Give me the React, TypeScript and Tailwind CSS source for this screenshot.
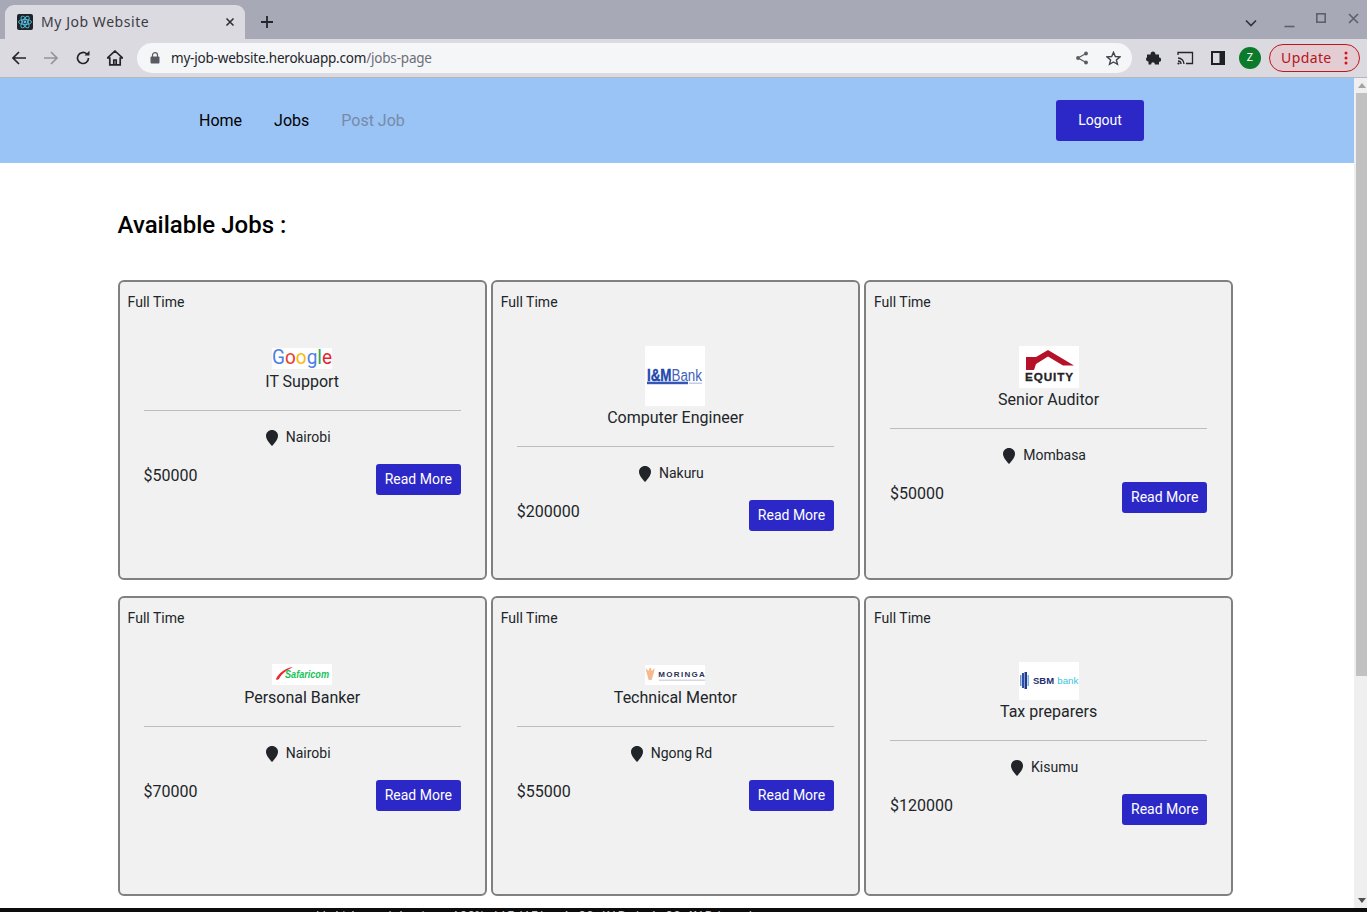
import type { ReactNode } from "react";

type Job = {
  title: string;
  place: string;
  pay: string;
  logoBox: string;
  logo: ReactNode;
};

function GoogleLogo() {
  return (
    <svg width="60" height="24" viewBox="0 0 60 24" className="block">
      <rect x="0" y="2" width="60" height="21" fill="#fff" />
      <text x="0" y="18" fontFamily="Roboto, sans-serif" fontSize="21" textLength="60" lengthAdjust="spacingAndGlyphs">
        <tspan fill="#4f7ee8">G</tspan>
        <tspan fill="#ea3a2e">o</tspan>
        <tspan fill="#f9bb0a">o</tspan>
        <tspan fill="#4f7ee8">g</tspan>
        <tspan fill="#2aa84f">l</tspan>
        <tspan fill="#ea1f2e">e</tspan>
      </text>
    </svg>
  );
}

function ImBankLogo() {
  return (
    <svg width="60" height="60" viewBox="0 0 60 60" className="block">
      <rect width="60" height="60" fill="#fff" />
      <text x="2" y="34.700" fontFamily="Liberation Sans, sans-serif" fontSize="16" textLength="55" lengthAdjust="spacingAndGlyphs">
        <tspan fontWeight="700" fill="#1f47ad" stroke="#1f47ad" strokeWidth="0.4">I&amp;M</tspan>
        <tspan fill="#3f63bb">Bank</tspan>
      </text>
      <rect x="2" y="35.700" width="41" height="2.500" fill="#3357b5" />
      <rect x="44" y="36.500" width="13" height="1.500" fill="#c3cdea" />
    </svg>
  );
}

function EquityLogo() {
  return (
    <svg width="60" height="42" viewBox="0 0 60 42" className="block">
      <rect width="60" height="42" fill="#fff" />
      <path d="M7 11H17L29 4 55 19.500H44L29 10.500 17 18 15 24H7Z" fill="#b5122a" />
      <text x="6" y="35" fontFamily="Liberation Sans, sans-serif" fontWeight="700" fontSize="11.700" fill="#242424" stroke="#242424" strokeWidth="0.3" textLength="48" lengthAdjust="spacing">EQUITY</text>
    </svg>
  );
}

function SafaricomLogo() {
  return (
    <svg width="60" height="24" viewBox="0 0 60 24" className="block">
      <rect x="0" y="2" width="60" height="21" fill="#fff" />
      <path d="M4 17C7 11 13 6 21 5 15 8 9 12 7 17 6 18 4 18 4 17Z" fill="#e8262d" />
      <text x="13" y="16" fontFamily="Liberation Sans, sans-serif" fontWeight="700" fontStyle="italic" fontSize="10" fill="#17c35a" textLength="44" lengthAdjust="spacingAndGlyphs">Safaricom</text>
    </svg>
  );
}

function MoringaLogo() {
  return (
    <svg width="60" height="24" viewBox="0 0 60 24" className="block">
      <rect x="0" y="3" width="60" height="20" fill="#fff" />
      <path d="M0.500 6 3.500 9 4.500 6 5.800 6 6.800 9 9.800 6 8.500 12 6.500 18H3.700L2 12Z" fill="#f5b98d" />
      <text x="13.300" y="15.300" fontFamily="Liberation Sans, sans-serif" fontWeight="700" fontSize="8" fill="#2a3154" textLength="46.500" lengthAdjust="spacing">MORINGA</text>
      <rect x="14" y="17.500" width="46" height="1.500" fill="#d5d8e0" />
    </svg>
  );
}

function SbmLogo() {
  return (
    <svg width="60" height="38" viewBox="0 0 60 38" className="block">
      <rect width="60" height="38" fill="#fff" />
      <rect x="1" y="13" width="1.500" height="11" fill="#6c8fd0" />
      <rect x="3" y="11" width="2" height="15" fill="#2a4fa8" />
      <rect x="5.500" y="10" width="2.500" height="17" fill="#1f3a8c" />
      <rect x="8.500" y="13" width="1.500" height="11" fill="#77b6e3" />
      <text x="14" y="22" fontFamily="Liberation Sans, sans-serif" fontWeight="700" fontSize="9" fill="#1e2f6f" textLength="21" lengthAdjust="spacingAndGlyphs">SBM</text>
      <text x="38.300" y="22" fontFamily="Liberation Sans, sans-serif" fontSize="9" fill="#37c4dc" textLength="21" lengthAdjust="spacingAndGlyphs">bank</text>
    </svg>
  );
}

const jobs: Job[] = [
  { title: "IT Support", place: "Nairobi", pay: "$50000", logoBox: "h-[24px]", logo: <GoogleLogo /> },
  { title: "Computer Engineer", place: "Nakuru", pay: "$200000", logoBox: "h-[60px]", logo: <ImBankLogo /> },
  { title: "Senior Auditor", place: "Mombasa", pay: "$50000", logoBox: "h-[42px]", logo: <EquityLogo /> },
  { title: "Personal Banker", place: "Nairobi", pay: "$70000", logoBox: "h-[24px]", logo: <SafaricomLogo /> },
  { title: "Technical Mentor", place: "Ngong Rd", pay: "$55000", logoBox: "h-[24px]", logo: <MoringaLogo /> },
  { title: "Tax preparers", place: "Kisumu", pay: "$120000", logoBox: "h-[38px]", logo: <SbmLogo /> },
];

function Pin() {
  return (
    <svg width="12" height="16" viewBox="0 0 12 16" className="block">
      <path d="M6 0C9.400 0 12 2.500 12 5.800 12 9.500 8.500 13.500 6 16 3.500 13.500 0 9.500 0 5.800 0 2.500 2.600 0 6 0Z" fill="#212529" />
    </svg>
  );
}

function JobCard({ job }: { job: Job }) {
  return (
    <div className="h-[300px] rounded-[6px] border-2 border-[#808080] bg-[#f1f1f1] text-[#212529]">
      <div className="pl-[8px] pt-[10px] text-[14px] leading-[21px]">Full Time</div>
      <div className="mt-[33px] flex flex-col items-center">
        <div className={job.logoBox}>{job.logo}</div>
        <div className="text-[16px] leading-[24px]">{job.title}</div>
      </div>
      <div className="mx-[24px] mt-[16px] border-t border-[#bdbdbd]" />
      <div className="mt-[16px] flex items-center justify-center gap-[8px] pr-[8px] text-[14px] leading-[21px]">
        <Pin />
        <span>{job.place}</span>
      </div>
      <div className="mx-[24px] mt-[16px] flex items-start justify-between">
        <span className="text-[16px] leading-[24px]">{job.pay}</span>
        <button className="h-[31px] w-[85px] rounded-[3px] bg-[#2c28c8] text-[14px] text-white">Read More</button>
      </div>
    </div>
  );
}

function Tabs() {
  return (
    <div className="flex h-[39px] items-end bg-[#a7a9b6] pl-[5px]">
      <div className="flex h-[34px] w-[240px] items-center rounded-t-[9px] bg-[#dadae0] pl-[12px] pr-[10px]">
        <svg width="16" height="16" viewBox="0 0 16 16" className="shrink-0">
          <rect width="16" height="16" rx="2" fill="#20232a" />
          <g fill="none" stroke="#53c1de" strokeWidth="0.9">
            <ellipse cx="8" cy="8" rx="6.500" ry="2.600" />
            <ellipse cx="8" cy="8" rx="6.500" ry="2.600" transform="rotate(60 8 8)" />
            <ellipse cx="8" cy="8" rx="6.500" ry="2.600" transform="rotate(120 8 8)" />
          </g>
          <circle cx="8" cy="8" r="1.400" fill="#53c1de" />
        </svg>
        <span className="mb-[2px] ml-[8px] flex-1 text-[14px] tracking-[0.55px] text-[#3c3c44]">My Job Website</span>
        <svg width="10" height="10" viewBox="0 0 10 10">
          <path d="M1.500 1.500 8.500 8.500M8.500 1.500 1.500 8.500" stroke="#2f3036" strokeWidth="1.600" />
        </svg>
      </div>
      <div className="flex h-[34px] items-center pl-[16px]">
        <svg width="12" height="12" viewBox="0 0 12 12">
          <path d="M6 0V12M0 6H12" stroke="#24252b" strokeWidth="1.800" />
        </svg>
      </div>
      <div className="ml-auto flex h-[39px] items-center pr-[8px]">
        <svg width="12" height="8" viewBox="0 0 12 8" className="mt-[6px]">
          <path d="M1 1.500 6 6.500 11 1.500" fill="none" stroke="#33343b" strokeWidth="1.700" />
        </svg>
        <svg width="11" height="11" viewBox="0 0 11 11" className="ml-[27px] mt-[6px]">
          <path d="M0.500 9.500H10.500" stroke="#5f6069" strokeWidth="1.600" />
        </svg>
        <svg width="10" height="10" viewBox="0 0 10 10" className="mb-[3px] ml-[21px]">
          <rect x="0.800" y="0.800" width="8.400" height="8.400" fill="none" stroke="#5f6069" strokeWidth="1.600" />
        </svg>
        <svg width="11" height="11" viewBox="0 0 11 11" className="mb-[3px] ml-[22px]">
          <path d="M1 1 10 10M10 1 1 10" stroke="#5f6069" strokeWidth="1.600" />
        </svg>
      </div>
    </div>
  );
}

function Toolbar() {
  return (
    <div className="flex h-[39px] items-start border-b border-[#b6b6bc] bg-[#dadae0]">
      <div className="flex h-[38px] items-center gap-[16px] pb-[1px] pl-[11px]">
        <svg width="16" height="16" viewBox="0 0 16 16">
          <path d="M15 8H2M8 2 2 8 8 14" fill="none" stroke="#23242a" strokeWidth="1.700" />
        </svg>
        <svg width="16" height="16" viewBox="0 0 16 16">
          <path d="M1 8H14M8 2 14 8 8 14" fill="none" stroke="#93949b" strokeWidth="1.700" />
        </svg>
        <svg width="16" height="16" viewBox="0 0 16 16">
          <path d="M13.500 8A5.500 5.500 0 1 1 11.800 4" fill="none" stroke="#23242a" strokeWidth="1.700" />
          <path d="M9.500 5.500H14.500V0.800Z" fill="#23242a" />
        </svg>
        <svg width="16" height="16" viewBox="0 0 16 16">
          <path d="M8 1 15.500 8H13.200V14.800H2.800V8H0.500Z M6.800 14.800V10H9.200V14.800" fill="none" stroke="#23242a" strokeWidth="1.700" />
        </svg>
      </div>
      <div className="ml-[14px] mt-[4px] flex h-[30px] w-[995px] items-center rounded-full bg-[#f5f6f8] pl-[13px] pr-[11px]">
        <svg width="10" height="12" viewBox="0 0 10 12">
          <rect x="0.500" y="4.500" width="9" height="7" rx="1" fill="#5a5b62" />
          <path d="M2.500 5V3.200A2.500 2.500 0 0 1 7.500 3.200V5" fill="none" stroke="#5a5b62" strokeWidth="1.200" />
        </svg>
        <span className="ml-[11px] flex-1 text-[13.500px] tracking-[-0.2px] text-[#24252b]">
          my-job-website.herokuapp.com<span className="text-[#6c6e78]">/jobs-page</span>
        </span>
        <svg width="14" height="14" viewBox="0 0 14 14">
          <path d="M11 2.500 3 7 11 11.500" fill="none" stroke="#5a5b62" strokeWidth="1.200" />
          <circle cx="11" cy="2.500" r="1.900" fill="#5a5b62" />
          <circle cx="3" cy="7" r="1.900" fill="#5a5b62" />
          <circle cx="11" cy="11.500" r="1.900" fill="#5a5b62" />
        </svg>
        <svg width="15" height="15" viewBox="0 0 15 15" className="ml-[17px]">
          <path d="M7.500 1.300 9.300 5.500 13.900 5.900 10.400 8.900 11.500 13.400 7.500 11 3.500 13.400 4.600 8.900 1.100 5.900 5.700 5.500Z" fill="none" stroke="#43444b" strokeWidth="1.400" />
        </svg>
      </div>
      <div className="flex h-[38px] items-center pb-[1px] pl-[14px]">
        <svg width="15" height="15" viewBox="0 0 15 15">
          <path d="M1 4.500H4.500C4.500 0.500 9.500 0.500 9.500 4.500H13V7.500C16 7.500 16 12 13 12V14.500H8.800C8.800 11.500 5.200 11.500 5.200 14.500H2.500V11.500C-0.500 11.500 -0.500 7.500 1 7.500Z" fill="#24252b" />
        </svg>
        <svg width="17" height="14" viewBox="0 0 17 14" className="ml-[16px]">
          <path d="M1 4V1.500H15.500V12.500H9" fill="none" stroke="#24252b" strokeWidth="1.300" />
          <path d="M1 7A6 6 0 0 1 7 13M1 10A3 3 0 0 1 4 13" fill="none" stroke="#24252b" strokeWidth="1.300" />
          <circle cx="1.500" cy="12.500" r="1.100" fill="#24252b" />
        </svg>
        <svg width="14" height="14" viewBox="0 0 14 14" className="ml-[17px]">
          <rect width="14" height="14" fill="#1f2025" />
          <rect x="2" y="2" width="6.500" height="10" fill="#dadae0" />
        </svg>
        <div className="ml-[14px] flex h-[22px] w-[22px] items-center justify-center rounded-full bg-[#0b7a2a] text-[11px] text-white">Z</div>
        <div className="ml-[8px] flex h-[28px] w-[91px] items-center rounded-full border border-[#c0151c] bg-[#e3cdd3] pl-[11px] text-[14px] tracking-[0.4px] text-[#b8141b]">
          Update
          <svg width="4" height="14" viewBox="0 0 4 14" className="ml-[12px]">
            <circle cx="2" cy="2" r="1.500" fill="#d8121b" />
            <circle cx="2" cy="7" r="1.500" fill="#d8121b" />
            <circle cx="2" cy="12" r="1.500" fill="#d8121b" />
          </svg>
        </div>
      </div>
    </div>
  );
}

function Scrollbar() {
  return (
    <div className="flex w-[13px] shrink-0 flex-col bg-[#efefef] pl-[2px]">
      <div className="flex h-[15px] items-center justify-center">
        <svg width="8" height="5" viewBox="0 0 8 5">
          <path d="M4 0 8 5H0Z" fill="#a3a3a3" />
        </svg>
      </div>
      <div className="h-[583px] bg-[#c1c1c1]" />
      <div className="mt-auto flex h-[15px] items-center justify-center">
        <svg width="8" height="5" viewBox="0 0 8 5">
          <path d="M0 0H8L4 5Z" fill="#505050" />
        </svg>
      </div>
    </div>
  );
}

export default function App() {
  return (
    <div className="flex h-[912px] flex-col overflow-hidden bg-white font-['Roboto',sans-serif]">
      <div className="font-['Noto_Sans',sans-serif]">
        <Tabs />
        <Toolbar />
      </div>
      <div className="flex min-h-0 flex-1">
        <div className="min-w-0 flex-1 overflow-hidden">
          <nav className="flex h-[85px] items-center bg-[#9ac3f6] pl-[183px] pr-[210px] text-[16px]">
            <a className="px-[16px] text-black">Home</a>
            <a className="px-[16px] text-black">Jobs</a>
            <a className="px-[16px] text-[#778ba6]">Post Job</a>
            <button className="ml-auto h-[41px] w-[88px] rounded-[3px] bg-[#2c28c8] text-[14px] text-white">Logout</button>
          </nav>
          <h1 className="ml-[117.600px] mt-[46px] text-[24px] font-medium leading-[32px] text-black">Available Jobs :</h1>
          <div className="ml-[117.600px] mt-[39px] grid w-[1115.600px] grid-cols-3 gap-x-[4px] gap-y-[16px]">
            {jobs.map((job) => (
              <JobCard key={job.title} job={job} />
            ))}
          </div>
        </div>
        <Scrollbar />
      </div>
      <div className="h-[4px] shrink-0 overflow-hidden bg-[#0c0c0c] pl-[317px] pt-[1px] font-['Liberation_Mono',monospace] text-[13.200px] leading-[15px] text-[#c4c4c4]">
        <div className="whitespace-pre">Writing objects: 100% (15/15), 1.92 KiB | 1.92 MiB/s, done.</div>
      </div>
    </div>
  );
}
